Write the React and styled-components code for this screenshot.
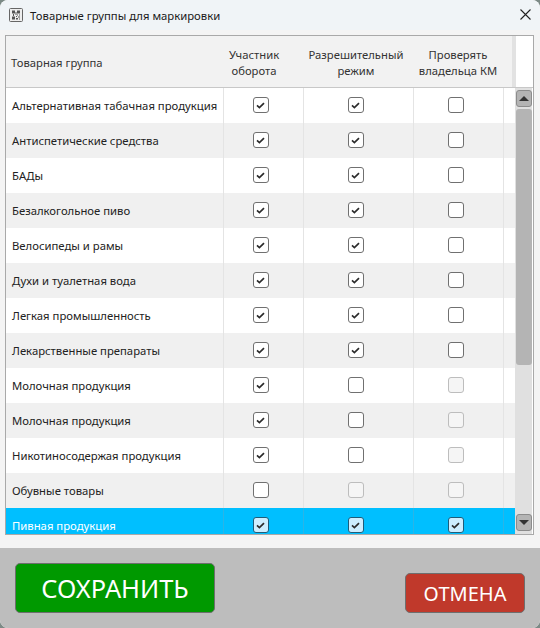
import React from 'react'
import styled, { createGlobalStyle } from 'styled-components'

const GlobalStyle = createGlobalStyle`
  html, body { margin: 0; padding: 0; background: #7c8a86; }
  body { font-family: "Noto Sans", "Open Sans", sans-serif; }
`

const COLUMNS = '218px 80px 110px 90px 1fr'

const groups = [
    { name: 'Альтернативная табачная продукция', checks: [true, true, false] },
    { name: 'Антиспетические средства', checks: [true, true, false] },
    { name: 'БАДы', checks: [true, true, false] },
    { name: 'Безалкогольное пиво', checks: [true, true, false] },
    { name: 'Велосипеды и рамы', checks: [true, true, false] },
    { name: 'Духи и туалетная вода', checks: [true, true, false] },
    { name: 'Легкая промышленность', checks: [true, true, false] },
    { name: 'Лекарственные препараты', checks: [true, true, false] },
    { name: 'Молочная продукция', checks: [true, false, false], disabled: [false, false, true] },
    { name: 'Молочная продукция', checks: [true, false, false], disabled: [false, false, true] },
    { name: 'Никотиносодержая продукция', checks: [true, false, false], disabled: [false, false, true] },
    { name: 'Обувные товары', checks: [false, false, false], disabled: [false, true, true] },
    { name: 'Пивная продукция', checks: [true, true, true], selected: true },
]

const Window = styled.div`
  width: 540px;
  height: 628px;
  display: flex;
  flex-direction: column;
  border-radius: 8px;
  overflow: hidden;
  background: #f4f4f4;
`
const TitleBar = styled.div`
  height: 30px;
  flex: none;
  display: flex;
  align-items: center;
  padding: 0 9px 0 9px;
  background: #f0f4f7;
  color: #1a1a1a;
  font-size: 11.3px;
`
const TitleText = styled.span`
  margin-left: 7px;
  flex: 1;
`
const CloseSlot = styled.span`
  display: flex;
  margin-bottom: 2px;
`
const Content = styled.div`
  flex: 1;
  min-height: 0;
  padding: 5px 6px 13px 5px;
  display: flex;
`
const Table = styled.div`
  flex: 1;
  display: flex;
  flex-direction: column;
  border: 1px solid #a9a9a9;
  background: #fff;
  overflow: hidden;
`
const Header = styled.div`
  height: 51px;
  flex: none;
  display: flex;
  border-bottom: 1px solid #c8c8c8;
  background: #fff;
`
const HeaderCells = styled.div`
  width: 506px;
  display: grid;
  grid-template-columns: 208px 80px 124px 86px;
  background: #f2f2f2;
  border-right: 4px solid #e2e2e2;
`
const HeaderCell = styled.div`
  display: flex;
  align-items: center;
  justify-content: ${p => (p.$left ? 'flex-start' : 'center')};
  text-align: ${p => (p.$left ? 'left' : 'center')};
  padding-top: 2px;
  padding-left: ${p => (p.$left ? '5px' : '0')};
  padding-right: ${p => (p.$last ? '6px' : '0')};
  font-size: 11.25px;
  line-height: 16px;
  color: #333;
`
const Body = styled.div`
  flex: 1;
  min-height: 0;
  display: flex;
`
const Rows = styled.div`
  flex: 1;
  min-width: 0;
  overflow: hidden;
`
const Row = styled.div`
  height: 35px;
  display: grid;
  grid-template-columns: ${COLUMNS};
  background: ${p => (p.$selected ? '#00bfff' : p.$odd ? '#f0f0f0' : '#fff')};
`
const NameCell = styled.div`
  display: flex;
  align-items: center;
  padding-left: 6px;
  font-size: 11.3px;
  white-space: nowrap;
  color: ${p => (p.$selected ? '#fff' : '#222')};
  border-right: 1px solid ${p => (p.$selected ? '#2ab4e6' : '#e4e4e4')};
`
const CheckCell = styled.div`
  display: flex;
  align-items: center;
  justify-content: center;
  padding: 0 6px 1px 0;
  border-right: 1px solid ${p => (p.$selected ? '#2ab4e6' : '#e4e4e4')};
`
const EmptyCell = styled.div``
const Box = styled.span`
  width: 14px;
  height: 14px;
  display: flex;
  align-items: center;
  justify-content: center;
  border-radius: 3px;
  border: 1px solid ${p => (p.$disabled ? '#bdbdbd' : p.$selected ? '#1d5c7a' : '#707070')};
  background: ${p => (p.$selected ? '#cdeeff' : p.$disabled ? '#f5f5f5' : '#fff')};
`
const Scrollbar = styled.div`
  width: 18px;
  flex: none;
  display: flex;
  flex-direction: column;
  align-items: center;
  padding: 2px 0 3px;
  gap: 2px;
  background: linear-gradient(to right, #e0e0e0 0, #e0e0e0 17px, #fff 17px);
`
const ScrollButton = styled.div`
  width: 16px;
  height: 17px;
  flex: none;
  display: flex;
  align-items: center;
  justify-content: center;
  box-sizing: border-box;
  border: 1px solid #8c8c8c;
  border-radius: 3px;
  background: #b4b4b4;
`
const Track = styled.div`
  flex: 1;
  width: 16px;
`
const Thumb = styled.div`
  height: 256px;
  border-radius: 3px;
  background: #b4b4b4;
`
const Footer = styled.div`
  height: 80px;
  flex: none;
  box-sizing: border-box;
  display: flex;
  align-items: flex-end;
  justify-content: space-between;
  padding: 0 15px 15px;
  background: #bdbdbd;
`
const ActionButton = styled.button`
  width: ${p => (p.$save ? '200px' : '120px')};
  height: ${p => (p.$save ? '50px' : '40px')};
  border: 1px solid #6e6e6e;
  border-radius: 5px;
  color: #fff;
  background: ${p => (p.$save ? '#009900' : '#c0392b')};
  font-family: inherit;
  font-size: ${p => (p.$save ? '25.4px' : '20px')};
  padding: 0;
`

const CheckMark = () => (
    <svg width="9" height="7" viewBox="0 0 9 7">
        <path d="M1 3.4 L3.4 5.6 L8 1.2" fill="none" stroke="#2b2b2b" strokeWidth="1.7" />
    </svg>
)

const CheckBox = ({ checked, disabled, selected }) => (
    <Box $disabled={disabled} $selected={selected}>
        {checked && <CheckMark />}
    </Box>
)

const QrIcon = () => (
    <svg width="14" height="14" viewBox="0 0 14 14">
        <rect x="0.5" y="0.5" width="13" height="13" rx="1" fill="#eee" stroke="#666" />
        <path
            d="M3 2.5h3v3H3z M8 2.5h3v3H8z M3 8.5h3v3H3z M4 6h1v2H4z M6.5 4h1v3h-1z M8 6.5h1v1H8z M10 6.5h1v1h-1z M7 8h1v1H7z M9 8.5h2v1H9z M7 10h2v1.5H7z M10 10.5h1v1h-1z"
            fill="#555"
        />
    </svg>
)

const CloseIcon = () => (
    <svg width="11" height="11" viewBox="0 0 11 11">
        <path d="M0.5 0.5 L10.5 10.5 M10.5 0.5 L0.5 10.5" stroke="#222" strokeWidth="1.1" />
    </svg>
)

const Arrow = ({ down }) => (
    <svg width="10" height="5" viewBox="0 0 10 5">
        <path d={down ? 'M0 0 H10 L5 5 Z' : 'M0 5 H10 L5 0 Z'} fill="#333" />
    </svg>
)

export default function App() {
    return (
        <Window>
            <GlobalStyle />
            <TitleBar>
                <QrIcon />
                <TitleText>Товарные группы для маркировки</TitleText>
                <CloseSlot><CloseIcon /></CloseSlot>
            </TitleBar>
            <Content>
                <Table>
                    <Header>
                        <HeaderCells>
                            <HeaderCell $left>Товарная группа</HeaderCell>
                            <HeaderCell>Участник<br />оборота</HeaderCell>
                            <HeaderCell>Разрешительный<br />режим</HeaderCell>
                            <HeaderCell $last>Проверять<br />владельца КМ</HeaderCell>
                        </HeaderCells>
                    </Header>
                    <Body>
                        <Rows>
                            {groups.map((group, i) => (
                                <Row key={i} $odd={i % 2 === 1} $selected={group.selected}>
                                    <NameCell $selected={group.selected}>{group.name}</NameCell>
                                    {group.checks.map((checked, j) => (
                                        <CheckCell key={j} $selected={group.selected}>
                                            <CheckBox
                                                checked={checked}
                                                disabled={group.disabled && group.disabled[j]}
                                                selected={group.selected}
                                            />
                                        </CheckCell>
                                    ))}
                                    <EmptyCell />
                                </Row>
                            ))}
                        </Rows>
                        <Scrollbar>
                            <ScrollButton><Arrow /></ScrollButton>
                            <Track><Thumb /></Track>
                            <ScrollButton><Arrow down /></ScrollButton>
                        </Scrollbar>
                    </Body>
                </Table>
            </Content>
            <Footer>
                <ActionButton $save>СОХРАНИТЬ</ActionButton>
                <ActionButton>ОТМЕНА</ActionButton>
            </Footer>
        </Window>
    )
}
